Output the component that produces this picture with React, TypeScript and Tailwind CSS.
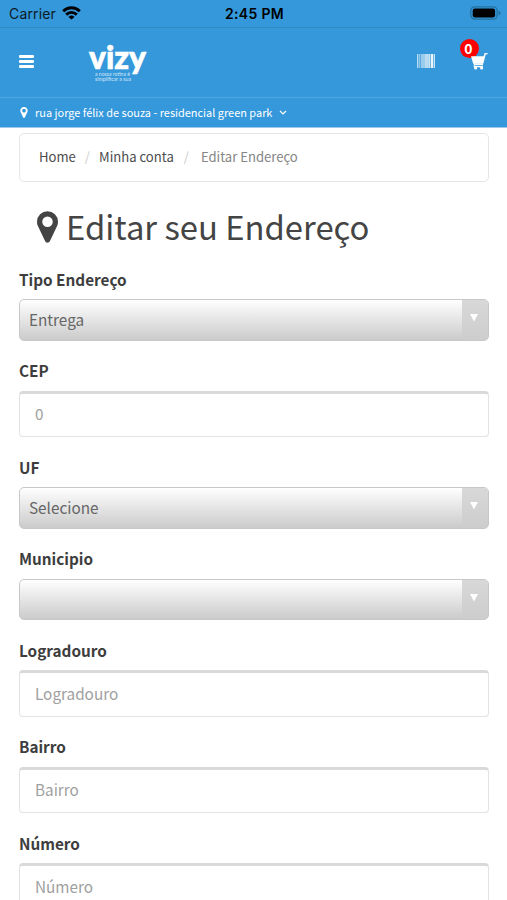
const fields = [
  { label: "Tipo Endereço", type: "select", value: "Entrega" },
  { label: "CEP", type: "input", value: "0" },
  { label: "UF", type: "select", value: "Selecione" },
  { label: "Municipio", type: "select", value: "" },
  { label: "Logradouro", type: "input", value: "Logradouro" },
  { label: "Bairro", type: "input", value: "Bairro" },
  { label: "Número", type: "input", value: "Número" },
];

function MapMarker({ className }: { className?: string }) {
  return (
    <svg viewBox="384 128 1024 1536" fill="currentColor" className={className}>
      <path d="M1152 640q0-106-75-181t-181-75-181 75-75 181 75 181 181 75 181-75 75-181zm256 0q0 109-33 179l-364 774q-16 33-47.5 52t-67.5 19-67.5-19-46.5-52l-365-774q-33-70-33-179 0-212 150-362t362-150 362 150 150 362z" />
    </svg>
  );
}

function StatusBar() {
  return (
    <div className="grid h-7 grid-cols-3 items-center border-b border-[#3289c4] pl-[9px] pr-[6px] font-['Inter',sans-serif] text-[14px] text-[#0c1a25]">
      <div className="flex items-center gap-[6px]">
        <span className="tracking-[0.15px]">Carrier</span>
        <svg viewBox="0 0 19 14" className="-mt-px h-[14px] w-[19px]" fill="none" stroke="#000" strokeWidth="2.9">
          <path d="M1.2 5.2a11.8 11.8 0 0 1 16.6 0" />
          <path d="M4.2 8.6a7.5 7.5 0 0 1 10.6 0" />
          <path d="M9.5 13.6 6.5 10.9a4.4 4.4 0 0 1 6 0z" fill="#000" stroke="none" />
        </svg>
      </div>
      <span className="pr-[1px] text-center text-[14px] font-semibold tracking-[0.35px] text-black">
        2:45 PM
      </span>
      <svg viewBox="0 0 31 14" className="-mt-px h-[14px] w-[31px] justify-self-end">
        <rect x="0.8" y="0.8" width="26.4" height="12.4" rx="4" fill="none" stroke="#25709f" strokeWidth="1.3" />
        <rect x="2.7" y="2.6" width="22.4" height="8.8" rx="2.2" fill="#000" />
        <path d="M28.6 4.8q2 .6 2 2.2t-2 2.2z" fill="#25709f" />
      </svg>
    </div>
  );
}

function Header() {
  return (
    <div className="flex h-[70px] items-center border-b border-[#50a7e0] px-[19px] text-white">
      <div className="-mt-[2px] flex w-[15px] flex-col gap-[2px]">
        <span className="h-[3px] rounded-[1px] bg-white" />
        <span className="h-[3px] rounded-[1px] bg-white" />
        <span className="h-[3px] rounded-[1px] bg-white" />
      </div>
      <svg viewBox="0 0 60 40" className="ml-[54px] h-10 w-[60px] overflow-visible" fill="#fff">
        <text x="1" y="25.8" textLength="57" lengthAdjust="spacingAndGlyphs" stroke="#fff" strokeWidth="0.7" className="font-['Lato',sans-serif] text-[32px] font-black">
          vizy
        </text>
        <g className="font-['Lato',sans-serif] text-[5.5px]" opacity="0.75">
          <text x="7" y="32.5" textLength="35" lengthAdjust="spacingAndGlyphs">a nossa rotina é</text>
          <text x="7" y="37.5" textLength="36" lengthAdjust="spacingAndGlyphs">simplificar a sua</text>
        </g>
      </svg>
      <svg viewBox="0 0 18 14" className="-mt-[3px] ml-auto h-[14px] w-[18px]" fill="#fff">
        <rect x="0" width="1.4" height="14" opacity="0.65" />
        <rect x="2" width="1.4" height="14" opacity="0.45" />
        <rect x="4" width="4" height="14" opacity="0.5" />
        <rect x="8" width="3.6" height="14" opacity="0.65" />
        <rect x="11.6" width="1.4" height="14" opacity="0.75" />
        <rect x="13" width="1" height="14" opacity="0.3" />
        <rect x="14" width="2" height="14" opacity="0.9" />
        <rect x="16.6" width="1.4" height="14" opacity="0.75" />
      </svg>
      <div className="relative -mt-[3px] ml-[36px] h-[17px] w-[17px]">
        <span className="absolute -left-[11px] -top-[14px] flex h-[19px] w-[19px] items-center justify-center rounded-full bg-[#fe0000] pr-[2px] text-[14px] font-bold leading-none">
          0
        </span>
        <svg viewBox="0 0 17 17" className="relative h-[17px] w-[17px]" fill="#fff">
          <path d="M0 3.2H12.6L13.3.8Q13.5 0 14.3 0H16.6V1.3H14.8L12.3 10.8H2.2z" />
          <path d="M2.4 10.6H12V11.9H3.6V12.8H12V14.2H3Q2 12.6 3 11.9z" />
          <circle cx="4.6" cy="15" r="1.6" />
          <circle cx="10.6" cy="15" r="1.6" />
        </svg>
      </div>
    </div>
  );
}

function Field({ label, type, value }: { label: string; type: string; value: string }) {
  return (
    <div className="mb-[18.5px]">
      <p className="mb-[8.5px] h-[23px] text-[15.3px] font-bold leading-[23px] text-[#3d3d3d]">
        {label}
      </p>
      {type === "select" ? (
        <div className="flex h-[41.5px] overflow-hidden rounded-[5px] border border-[#c8c8c8] bg-linear-to-b from-white to-[#cbcbcb]">
          <span className="flex flex-1 items-center pb-px pl-[9px] text-[15.3px] text-[#666]">
            {value}
          </span>
          <span className="flex w-[26px] justify-center bg-linear-to-b from-[#d8d8d8] to-[#cdcdcd] pt-[14px]">
            <svg viewBox="0 0 8 8" className="-ml-[2px] h-2 w-2" fill="#fff">
              <path d="M0 0H8L4 7.5z" />
            </svg>
          </span>
        </div>
      ) : (
        <div className="flex h-[46.5px] items-center rounded-[4px] border border-t-[3px] border-[#e3e3e3] border-t-[#d9d9d9] pb-[2px] pl-[15px] text-[15.3px] text-[#a0a0a0]">
          {value}
        </div>
      )}
    </div>
  );
}

export default function App() {
  return (
    <main className="h-[900px] w-[507px] overflow-hidden bg-white font-['Noto_Sans_CJK_SC',sans-serif]">
      <header className="h-[128px] border-b border-[#9bcced] bg-[#3498db]">
        <StatusBar />
        <Header />
        <div className="flex h-[29px] items-center px-5 text-[10.95px] text-white">
          <MapMarker className="h-[11px] w-2" />
          <span className="ml-[7px]">
            rua jorge félix de souza - residencial green park
          </span>
          <svg viewBox="0 0 8 6" className="ml-[7px] h-[6px] w-2" fill="none" stroke="#fff" strokeWidth="1.2">
            <path d="M1 1l3 3 3-3" />
          </svg>
        </div>
      </header>

      <div className="pl-[19px] pr-[18px] pt-[5px]">
        <nav className="flex h-[49px] items-center rounded-[5px] border-[1.5px] border-[#e9e5e6] pb-px pl-[19px] text-[13.1px] text-[#4c4c4c]">
          <span>Home</span>
          <span className="mx-[9px] text-[#ccc]">/</span>
          <span>Minha conta</span>
          <span className="ml-[10px] mr-[12px] text-[#ccc]">/</span>
          <span className="text-[#858585]">Editar Endereço</span>
        </nav>

        <h1 className="mt-[20px] flex h-[50px] items-center pl-[18px] text-[32.8px] leading-none text-[#444]">
          <MapMarker className="h-[32px] w-[21px]" />
          <span className="mb-[2px] ml-[8px]">Editar seu Endereço</span>
        </h1>

        <div className="mt-[15.5px]">
          {fields.map((field) => (
            <Field key={field.label} {...field} />
          ))}
        </div>
      </div>
    </main>
  );
}
